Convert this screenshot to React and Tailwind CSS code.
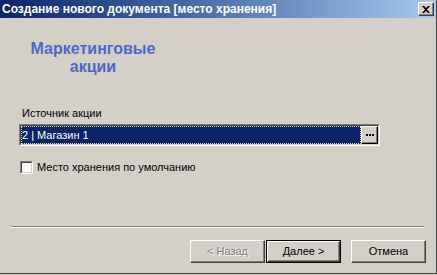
export default function App() {
  const btn =
    "w-[75px] h-[23px] flex items-center justify-center bg-[#d4d0c8] border border-t-white border-l-white border-r-[#404040] border-b-[#404040] shadow-[inset_-1px_-1px_0_#808080]";
  return (
    <div className="w-[437px] h-[275px] bg-[#d4d0c8] flex flex-col overflow-hidden text-[11px] text-black" style={{ fontFamily: '"Liberation Sans", Arial, sans-serif' }}>
      <div className="flex flex-row">
        <div className="flex-1 flex flex-col border-r border-r-[#404040] border-b border-b-[#404040] h-[274px]">
          <div className="h-[18px] flex items-center justify-between pl-[2px] pr-[2px] bg-gradient-to-r from-[#0a246a] to-[#a6caf0]">
            <span className="text-white font-bold text-[12px] leading-none">Создание нового документа [место хранения]</span>
            <div className="w-[16px] h-[14px] bg-[#d4d0c8] border border-t-white border-l-white border-r-[#404040] border-b-[#404040] shadow-[inset_-1px_-1px_0_#808080] flex items-center justify-center">
              <svg width="8" height="7" viewBox="0 0 8 7">
                <path d="M0 0h2l2 2 2-2h2L5 3.5 8 7H6L4 5 2 7H0l3-3.5z" fill="#000" />
              </svg>
            </div>
          </div>
          <div className="w-[186px] mt-[22px] text-center text-[#4f67c9] font-bold text-[16px] leading-[18px]">
            Маркетинговые<br />акции
          </div>
          <div className="mt-[31px] pl-[22px] leading-[13px]">Источник акции</div>
          <div className="mt-[4px] ml-[19px] w-[361px] h-[22px] border border-t-[#808080] border-l-[#808080] border-r-white border-b-white">
            <div className="w-full h-full border border-t-[#404040] border-l-[#404040] border-r-[#d4d0c8] border-b-[#d4d0c8] flex flex-row bg-white">
              <div className="flex-1 bg-[#0a246a] text-white flex items-center pl-[1px] outline-1 outline-dotted outline-[#e8d88a] -outline-offset-1">
                2 | Магазин 1
              </div>
              <div className="w-[17px] h-full bg-[#d4d0c8] border border-t-white border-l-white border-r-black border-b-black shadow-[inset_-1px_-1px_0_#808080] flex items-center justify-center gap-[1px]">
                <span className="w-[2px] h-[2px] bg-black"></span>
                <span className="w-[2px] h-[2px] bg-black"></span>
                <span className="w-[2px] h-[2px] bg-black"></span>
              </div>
            </div>
          </div>
          <div className="mt-[15px] ml-[20px] flex flex-row items-center gap-[4px]">
            <div className="w-[13px] h-[13px] border border-t-[#808080] border-l-[#808080] border-r-white border-b-white">
              <div className="w-full h-full bg-white border border-t-[#404040] border-l-[#404040] border-r-[#d4d0c8] border-b-[#d4d0c8]"></div>
            </div>
            <span className="leading-[13px]">Место хранения по умолчанию</span>
          </div>
          <div className="mt-[52px] ml-[11px] w-[413px] h-[2px] border-t border-t-[#808080] border-b border-b-white"></div>
          <div className="mt-[12px] flex flex-row pl-[190px]">
            <div className={btn + " text-[#808080]"}>
              <span className="[text-shadow:1px_1px_0_#ffffff]">&lt; Назад</span>
            </div>
            <div className="ml-[1px] w-[75px] h-[23px] border border-black">
              <div className="w-full h-full flex items-center justify-center border border-t-white border-l-white border-r-[#404040] border-b-[#404040] shadow-[inset_-1px_-1px_0_#808080]">
                Далее &gt;
              </div>
            </div>
            <div className={btn + " ml-[10px]"}>Отмена</div>
          </div>
        </div>
      </div>
    </div>
  );
}
